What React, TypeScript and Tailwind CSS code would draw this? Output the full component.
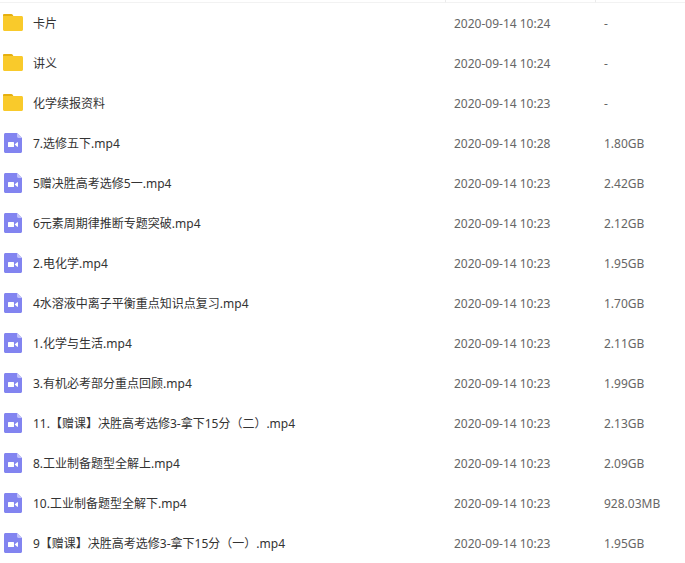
import React from "react";

type FileItem = {
  name: string;
  date: string;
  size: string;
  type: "folder" | "video";
};

const files: FileItem[] = [
  { name: "卡片", date: "2020-09-14 10:24", size: "-", type: "folder" },
  { name: "讲义", date: "2020-09-14 10:24", size: "-", type: "folder" },
  { name: "化学续报资料", date: "2020-09-14 10:23", size: "-", type: "folder" },
  { name: "7.选修五下.mp4", date: "2020-09-14 10:28", size: "1.80GB", type: "video" },
  { name: "5赠决胜高考选修5一.mp4", date: "2020-09-14 10:23", size: "2.42GB", type: "video" },
  { name: "6元素周期律推断专题突破.mp4", date: "2020-09-14 10:23", size: "2.12GB", type: "video" },
  { name: "2.电化学.mp4", date: "2020-09-14 10:23", size: "1.95GB", type: "video" },
  { name: "4水溶液中离子平衡重点知识点复习.mp4", date: "2020-09-14 10:23", size: "1.70GB", type: "video" },
  { name: "1.化学与生活.mp4", date: "2020-09-14 10:23", size: "2.11GB", type: "video" },
  { name: "3.有机必考部分重点回顾.mp4", date: "2020-09-14 10:23", size: "1.99GB", type: "video" },
  { name: "11.【赠课】决胜高考选修3-拿下15分（二）.mp4", date: "2020-09-14 10:23", size: "2.13GB", type: "video" },
  { name: "8.工业制备题型全解上.mp4", date: "2020-09-14 10:23", size: "2.09GB", type: "video" },
  { name: "10.工业制备题型全解下.mp4", date: "2020-09-14 10:23", size: "928.03MB", type: "video" },
  { name: "9【赠课】决胜高考选修3-拿下15分（一）.mp4", date: "2020-09-14 10:23", size: "1.95GB", type: "video" },
];

const FolderIcon: React.FC = () => (
  <svg className="h-[26px] w-[26px] shrink-0" viewBox="0 0 26 26" aria-hidden="true">
    <path d="M3 10V5.2C3 4.5 3.5 4 4.2 4h7.2c.5 0 .8.2 1.1.6L14 7v3H3Z" fill="#e6b00f" />
    <path d="M3 6h18.5c.8 0 1.5.7 1.5 1.5v12c0 .8-.7 1.5-1.5 1.5h-17c-.8 0-1.5-.7-1.5-1.5V6Z" fill="#f9ca2b" />
  </svg>
);

const VideoIcon: React.FC = () => (
  <svg className="h-[26px] w-[26px] shrink-0" viewBox="0 0 26 26" aria-hidden="true">
    <path d="M5.5 3H17l5 5v13.5c0 .8-.7 1.5-1.5 1.5h-15c-.8 0-1.5-.7-1.5-1.5v-17C4 3.7 4.7 3 5.5 3Z" fill="#8284f0" />
    <path d="M17 3l5 5h-3.6c-.8 0-1.4-.6-1.4-1.4V3Z" fill="#c1c2fa" />
    <rect x="8" y="12" width="6" height="5" rx=".5" fill="#fff" />
    <path d="M14.6 14.5l2.6-2.2c.4-.3.8-.1.8.3v3.8c0 .4-.4.6-.8.3l-2.6-2.2Z" fill="#fff" />
  </svg>
);

const App: React.FC = () => {
  return (
    <main className="min-h-screen bg-white font-['Noto_Sans','Noto_Sans_CJK_SC',sans-serif] text-xs">
      <table className="w-full table-fixed border-separate border-spacing-0 text-left">
        <colgroup>
          <col />
          <col className="w-[150px]" />
          <col className="w-[90px]" />
        </colgroup>
        <thead>
          <tr>
            <td className="h-[3px] border-b border-[#f2f2f2] p-0" />
            <td className="h-[3px] border-b border-l border-[#f2f2f2] border-l-[#ebebeb] p-0" />
            <td className="h-[3px] border-b border-l border-[#f2f2f2] border-l-[#ebebeb] p-0" />
          </tr>
        </thead>
        <tbody>
          {files.map((file) => (
            <tr key={file.name} className="h-10">
              <td className="p-0">
                <a href="#" className="flex items-center gap-[7px] whitespace-nowrap text-[#333]">
                  {file.type === "folder" ? <FolderIcon /> : <VideoIcon />}
                  <span className="pt-0.5">{file.name}</span>
                </a>
              </td>
              <td className="whitespace-nowrap p-0 pt-0.5 pl-[9px] text-[#666]">{file.date}</td>
              <td className="whitespace-nowrap p-0 pt-0.5 pl-[9px] text-[#666]">{file.size}</td>
            </tr>
          ))}
        </tbody>
      </table>
    </main>
  );
};

export default App;
